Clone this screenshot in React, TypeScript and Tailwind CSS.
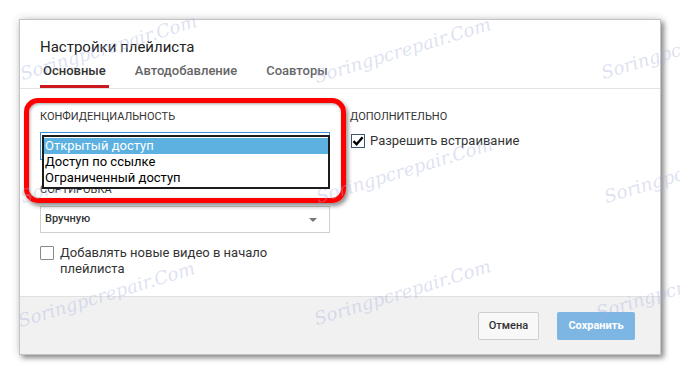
import React from 'react';

const marks = [
  { x: 24, y: 85 },
  { x: 318, y: 88 },
  { x: 605, y: 84 },
  { x: 24, y: 208 },
  { x: 320, y: 208 },
  { x: 608, y: 208 },
  { x: 22, y: 332 },
  { x: 318, y: 330 },
  { x: 600, y: 324 },
];

const Watermark = ({ x, y }: { x: number; y: number }) => (
  <div
    className="pointer-events-none absolute origin-bottom-left -rotate-[17deg] whitespace-nowrap text-[18px] italic leading-[22px] text-[#aab3dd]/40 font-['DejaVu_Serif',serif]"
    style={{ left: x, top: y - 22 }}
  >
    Soringpcrepair.Com
  </div>
);

const App = () => {
  return (
    <div className="relative h-[375px] w-[680px] overflow-hidden bg-white pl-[19px] pt-[19px] font-['Roboto','Noto_Sans',sans-serif]">
      <div className="flex h-[336px] w-[642px] flex-col border border-[#c4c4c4] bg-white shadow-[3px_3px_5px_rgba(0,0,0,0.4),0_0_9px_rgba(0,0,0,0.18)]">
        {/* header */}
        <div className="h-[69px] border-b border-[#e3e3e3] px-[20px] pt-[17px]">
          <h1 className="text-[15px] leading-5 text-[#222]">Настройки плейлиста</h1>
          <div className="mt-[6px] flex gap-[23px] text-[13px] leading-4 font-medium">
            <span className="border-b-[3px] border-[#cc181e] px-[3px] pb-[6px] text-[#333]">Основные</span>
            <span className="border-b-[3px] border-transparent px-[3px] pb-[6px] text-[#666]">Автодобавление</span>
            <span className="border-b-[3px] border-transparent px-[3px] pb-[6px] text-[#666]">Соавторы</span>
          </div>
        </div>

        {/* body */}
        <div className="flex h-[207px] px-[20px] pt-[20px] text-[#333]">
          <div className="w-[290px]">
            <div className="text-[11px] leading-4 uppercase">Конфиденциальность</div>
            <div className="relative mt-[7px] h-[28px] border border-[#3a8fd9] bg-white">
              <div className="absolute left-px top-[2px] z-10 w-[288px] border-2 border-[#1c1c1c] bg-white py-px text-[13px] leading-4 text-black">
                <div className="bg-[#5cb1e0] pl-px text-white">Открытый доступ</div>
                <div className="pl-px">Доступ по ссылке</div>
                <div className="pl-px">Ограниченный доступ</div>
              </div>
            </div>
            <div className="mt-[22px] text-[11px] leading-4 uppercase">Сортировка</div>
            <div className="mt-[8px] flex h-[27px] items-center justify-between border border-[#cfcfcf] pl-[4px] pr-[12px]">
              <span className="text-[11px] font-medium">Вручную</span>
              <span className="h-0 w-0 border-x-[4px] border-t-[4px] border-x-transparent border-t-[#777]" />
            </div>
            <div className="mt-[12px] flex gap-[6px] text-[13px] leading-4">
              <span className="mt-px h-[14px] w-[14px] shrink-0 rounded-[1px] border border-[#8a8a8a] bg-white" />
              <span className="w-[215px]">Добавлять новые видео в начало плейлиста</span>
            </div>
          </div>

          <div className="ml-[20px]">
            <div className="text-[11px] leading-4 uppercase">Дополнительно</div>
            <div className="mt-[8px] flex items-center gap-[5px] text-[13px] leading-4">
              <span className="ml-px flex h-[14px] w-[14px] items-center justify-center border border-[#3d5570] bg-white">
                <svg width="12" height="12" viewBox="0 0 12 12">
                  <path d="M1.5 6.2 L4.6 9.3 L10.6 2.2" fill="none" stroke="#000" strokeWidth="2.4" />
                </svg>
              </span>
              <span>Разрешить встраивание</span>
            </div>
          </div>
        </div>

        {/* footer */}
        <div className="flex h-[58px] items-start justify-end gap-[18px] border-t border-[#e0e0e0] bg-[#f1f1f1] pr-[25px] pt-[15px]">
          <button className="h-[28px] w-[61px] rounded-[2px] border border-[#cfcfcf] bg-[#f8f8f8] text-[11px] font-medium text-[#333]">
            Отмена
          </button>
          <button className="h-[28px] w-[78px] rounded-[2px] bg-[#7db5e3] text-[11px] font-bold text-white">
            Сохранить
          </button>
        </div>
      </div>

      {/* annotation frame */}
      <div className="pointer-events-none absolute left-[24px] top-[98px] h-[105px] w-[322px] rounded-[14px] border-[5px] border-[#ff0000] shadow-[2px_3px_4px_rgba(0,0,0,0.45),inset_1px_1px_3px_rgba(0,0,0,0.35)]" />

      {marks.map((m, i) => (
        <Watermark key={i} x={m.x} y={m.y} />
      ))}
    </div>
  );
};

export default App;
